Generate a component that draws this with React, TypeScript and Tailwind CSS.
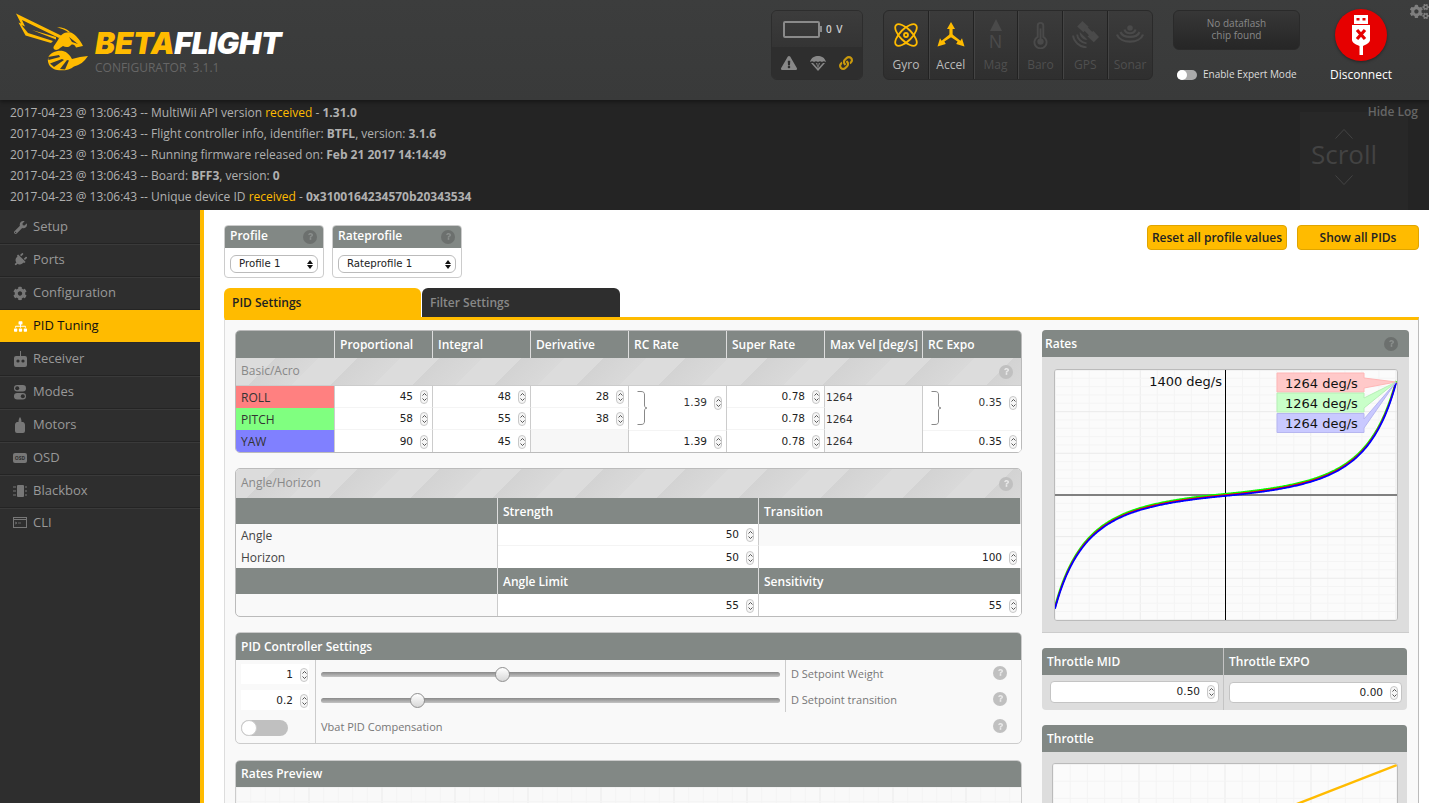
import React from "react";
import { FaWrench, FaPlug, FaCog, FaSitemap, FaCogs, FaExclamationTriangle, FaLink, FaQuestion } from "react-icons/fa";

const Wasp = () => (
  <svg width="90" height="75" viewBox="0 0 90 75" className="shrink-0">
    <g fill="#ffbb00">
      <path d="M16 13.5 L62 36 L59 38 L22 20 L25 26.5 L21.5 25 L28 33 L53 41 L51 43 L25.5 35.5 L18.5 22.5 L21 23.5 Z" />
      <path d="M32 30 L56 37 L56 39.5 Z" />
      <path d="M57 27 C63 27.5 67 29 70 32 L68 32 C65 30 61 28.5 57 27 Z" />
      <path d="M58 40 C60 35 65 31 71 32.5 C76 35 80 40 83 46 L76 47.5 C75 45 73 44 71 45 C70 47 66 48 63 46 L60 48 C56 52 52 49 54 46 Z" />
      <path d="M48 58 C50 52 58 50 63 51 C67 52 70 55 72 59 L80 57 L88 56 C84 62 80 65 74 66.5 C70 70 63 71 57 70 C51 69 47 64 48 58 Z" />
    </g>
    <g fill="#3a3b3b">
      <path d="M69 37 L78 44 L72 42 Z" />
      <path d="M48 57 L59 55 L60 57 L48.5 60 Z" />
      <path d="M50 63.5 L62 59 L64 60 L54 67 Z" />
      <path d="M60 69 L67 60 L69 60.5 L65 69.5 Z" />
    </g>
  </svg>
);

const Gyro = () => (
  <svg width="24" height="24" viewBox="0 0 24 24" fill="none" stroke="#ffbb00" strokeWidth="1.8">
    <ellipse cx="12" cy="12" rx="14" ry="6" transform="rotate(45 12 12)" />
    <ellipse cx="12" cy="12" rx="14" ry="6" transform="rotate(-45 12 12)" />
    <circle cx="12" cy="12" r="2" />
  </svg>
);
const Accel = () => (
  <svg width="28" height="25" viewBox="0 0 28 25" fill="#ffbb00">
    <path d="M14 0 L18 7 L15.6 7 L15.6 13 L12.4 13 L12.4 7 L10 7 Z" />
    <path d="M13.4 11.8 L15.2 14.6 L7.4 19.6 L8.8 22 L0.5 24.5 L3 16.2 L4.6 18.8 Z" />
    <path d="M14.6 11.8 L12.8 14.6 L20.6 19.6 L19.2 22 L27.5 24.5 L25 16.2 L23.4 18.8 Z" />
  </svg>
);
const Mag = () => (
  <div className="flex flex-col items-center">
    <div className="w-0 h-0 border-l-[6px] border-r-[6px] border-b-[12px] border-l-transparent border-r-transparent border-b-[#4a4a4a]" />
    <span className="text-[18px] leading-[18px] mt-[2px] text-[#4a4a4a] font-['Liberation_Sans',sans-serif]">N</span>
  </div>
);
const Baro = () => (
  <svg width="15" height="28" viewBox="0 0 16 28" fill="none" stroke="#4a4a4a" strokeWidth="2">
    <path d="M5 16 V4 a3 3 0 0 1 6 0 V16 a6.5 6.5 0 1 1 -6 0 Z" />
    <circle cx="8" cy="21" r="3.4" fill="#4a4a4a" stroke="none" />
    <path d="M8 20 V7" />
  </svg>
);
const Gps = () => (
  <svg width="27" height="27" viewBox="0 0 26 26" fill="#4a4a4a">
    <path d="M10 0 L16 5.5 L11 10.8 L5 5.3 Z" />
    <path d="M20.5 9.5 L26 15.3 L21 20.5 L15 15 Z" />
    <path d="M12 7.5 L14.5 5.5 L21 12 L18 15.5 L11.5 9 Z" />
    <path d="M1 14 C1.5 19.5 7 25 14 25.5" stroke="#4a4a4a" strokeWidth="1.8" fill="none" />
    <path d="M5 13 C5 17 9 21 14 21.5" stroke="#4a4a4a" strokeWidth="1.8" fill="none" />
    <path d="M7.5 10.5 L15 18 C11 18.5 7 15 7.5 10.5 Z" />
  </svg>
);
const Sonar = () => (
  <svg width="28" height="22" viewBox="0 0 28 22" fill="none" stroke="#4a4a4a" strokeWidth="2.2">
    <circle cx="14" cy="4" r="2.8" fill="#4a4a4a" stroke="none" />
    <path d="M8.5 5.5 C10 10.5 18 10.5 19.5 5.5" />
    <path d="M4.5 8 C7 14.5 21 14.5 23.5 8" />
    <path d="M1 10.5 C4 20 24 20 27 10.5" />
  </svg>
);

const Sensor = ({ label, active, children }: { label: string; active?: boolean; children: React.ReactNode }) => (
  <div className="flex-1 flex flex-col items-center border-r border-[#222] last:border-r-0 shadow-[1px_0_0_#444] last:shadow-none">
    <div className="h-[45px] flex items-center justify-center mt-[1px]">{children}</div>
    <span className={active ? "text-[12px] leading-[16px] text-[#bbb]" : "text-[12px] leading-[16px] text-[#4f4f4f]"}>{label}</span>
  </div>
);

const Usb = () => (
  <svg width="20" height="40" viewBox="0 0 20 40" fill="white">
    <path d="M3 0 H17 V9 H3 Z M5.5 3 V5.5 H8.5 V3 Z M11.5 3 V5.5 H14.5 V3 Z" fillRule="evenodd" />
    <path d="M1 10 H19 V25 C19 28 14 30 12 31 V40 H8.5 V31 C6 30 1 28 1 25 Z" />
    <path d="M6 15 L14 24 M14 15 L6 24" stroke="#e60000" strokeWidth="3.2" />
  </svg>
);

const Nav = ({ label, active, last, icon }: { label: string; active?: boolean; last?: boolean; icon: React.ReactNode }) => (
  <div className={active
    ? "h-[33px] flex items-center bg-[#ffbb00] text-[#111] text-[13px] pl-[13px] border-b border-[#2a2a2a]"
    : last
      ? "h-[31px] flex items-center text-[#999] text-[13px] pl-[13px] pb-[2px]"
      : "h-[33px] flex items-center text-[#999] text-[13px] pl-[13px] border-b border-[#242424] shadow-[0_1px_0_#3a3a3a]"}>
    <span className="w-[14px] flex justify-center items-center">{icon}</span>
    <span className="ml-[6px]">{label}</span>
  </div>
);

const ReceiverIcon = () => (
  <svg width="13" height="16" viewBox="0 0 13 16" fill="#777"><path d="M6 0 H7 V5 H11 a2 2 0 0 1 2 2 V14 a2 2 0 0 1 -2 2 H2 a2 2 0 0 1 -2 -2 V7 a2 2 0 0 1 2 -2 H6 Z" /><circle cx="4" cy="10" r="1.6" fill="#2e2e2e" /><circle cx="9" cy="10" r="1.6" fill="#2e2e2e" /></svg>
);
const ModesIcon = () => (
  <svg width="12" height="15" viewBox="0 0 12 15" fill="#777"><rect y="0" width="12" height="6.5" rx="3.2" /><rect y="8" width="12" height="6.5" rx="3.2" /><circle cx="3.2" cy="3.2" r="2" fill="#2e2e2e" /><circle cx="8.8" cy="11.2" r="2" fill="#2e2e2e" /></svg>
);
const MotorsIcon = () => (
  <svg width="10" height="16" viewBox="0 0 10 16" fill="#777"><path d="M5 0 C6 1 6.5 3 6.5 5 H8 C9.5 5.5 10 7 10 8 V14 a2 2 0 0 1 -2 2 H2 a2 2 0 0 1 -2 -2 V8 C0 7 .5 5.5 2 5 H3.5 C3.5 3 4 1 5 0 Z" /></svg>
);
const OsdIcon = () => (
  <div className="w-[14px] h-[10px] rounded-[2px] bg-[#777] flex items-center justify-center"><span className="text-[5px] leading-none font-bold text-[#2e2e2e]">OSD</span></div>
);
const BlackboxIcon = () => (
  <svg width="14" height="12" viewBox="0 0 14 12" fill="#777"><rect x="4" width="7" height="12" rx="1" /><path d="M0 1.5 H3 V2.5 H0 Z M0 5.5 H3 V6.5 H0 Z M0 9.5 H3 V10.5 H0 Z M12 1.5 H14 V2.5 H12 Z M12 5.5 H14 V6.5 H12 Z M12 9.5 H14 V10.5 H12 Z" /></svg>
);
const CliIcon = () => (
  <svg width="14" height="11" viewBox="0 0 14 11" fill="none" stroke="#777"><rect x=".5" y=".5" width="13" height="10" /><path d="M.5 2.5 H13.5" /><path d="M2 5 L4 6 L2 7 M5 6 H8" strokeWidth=".8" /></svg>
);

const Help = ({ light, className }: { light?: boolean; className?: string }) => (
  <span className={(light
    ? "w-[14px] h-[14px] rounded-full bg-[#c0c0c0] flex items-center justify-center shrink-0 "
    : "w-[14px] h-[14px] rounded-full bg-[#6c706e] flex items-center justify-center shrink-0 ") + (className ?? "")}>
    <FaQuestion size={7} color={light ? "#e8e8e8" : "#8a8e8c"} />
  </span>
);

const Spin = () => (
  <span className="w-[8px] h-[14px] rounded-[4px] border border-[#c8c8c8] bg-[#f6f6f6] flex flex-col items-center justify-center gap-[2px] shrink-0">
    <svg width="5" height="3" viewBox="0 0 5 3"><path d="M.5 2.5 L2.5 .5 L4.5 2.5" fill="none" stroke="#444" strokeWidth=".9" /></svg>
    <svg width="5" height="3" viewBox="0 0 5 3"><path d="M.5 .5 L2.5 2.5 L4.5 .5" fill="none" stroke="#444" strokeWidth=".9" /></svg>
  </span>
);

const Num = ({ v, className }: { v?: string; className?: string }) => (
  <div className={"flex items-center justify-end gap-[7px] pt-[1px] pr-[4px] bg-white font-['DejaVu_Sans',sans-serif] text-[10.5px] text-[#222] " + (className ?? "")}>
    {v !== undefined && <><span>{v}</span><Spin /></>}
  </div>
);

const Bracket = () => (
  <svg width="11" height="34" viewBox="0 0 11 34" fill="none" stroke="#888" className="shrink-0"><path d="M.5 .5 H4 C7 .5 7.5 2 7.5 4 V14 C7.5 16 8.5 17 10 17 C8.5 17 7.5 18 7.5 20 V30 C7.5 32 7 33.5 4 33.5 H.5" /></svg>
);

const Select = ({ label, w }: { label: string; w: string }) => (
  <div className={"h-[18px] rounded-[6px] border border-[#bbb] bg-white flex items-center justify-between pl-[8px] pr-[4px] font-['DejaVu_Sans',sans-serif] text-[10.2px] text-[#222] " + w}>
    <span>{label}</span>
    <span className="flex flex-col gap-[1px]">
      <span className="w-0 h-0 border-l-[3px] border-r-[3px] border-b-[4px] border-l-transparent border-r-transparent border-b-[#111]" />
      <span className="w-0 h-0 border-l-[3px] border-r-[3px] border-t-[4px] border-l-transparent border-r-transparent border-t-[#111]" />
    </span>
  </div>
);

const Th = ({ children, className }: { children?: React.ReactNode; className?: string }) => (
  <div className={"bg-[#828885] text-white text-[12px] font-semibold flex items-center pl-[5px] border-r border-[#ddd] last:border-r-0 " + (className ?? "")}>{children}</div>
);

const stripes = "bg-[repeating-linear-gradient(135deg,#dcdcdc_0,#dcdcdc_28px,#d3d3d3_28px,#d9d9d9_58px)]";

const rateCurve = (t: number) => {
  const a = Math.abs(t);
  const x = t * a * a * a * 0.35 + t * 0.65;
  return (200 * 1.39 * x) / (1 - a * 0.78);
};
const curvePath = (dy: number) => {
  let d = "";
  for (let i = 0; i <= 340; i++) {
    const t = (i - 170) / 170;
    const x = 170.5 + 170.5 * t;
    const y = 125 - (125 * rateCurve(t)) / 1400 + dy;
    d += (i === 0 ? "M" : "L") + x.toFixed(2) + " " + y.toFixed(2) + " ";
  }
  return d;
};

const Grid = ({ w, h, sx, sy, mx, my }: { w: number; h: number; sx: number; sy: number; mx: number; my: number }) => {
  const v: React.ReactNode[] = [];
  for (let i = 0; i * sx <= w; i++) {
    v.push(<line key={"v" + i} x1={i * sx} x2={i * sx} y1={0} y2={h} stroke={i % mx === 0 ? "#ebebeb" : "#f4f4f4"} />);
  }
  for (let i = 0; i * sy <= h; i++) {
    v.push(<line key={"h" + i} y1={i * sy} y2={i * sy} x1={0} x2={w} stroke={i % my === 0 ? "#ebebeb" : "#f4f4f4"} />);
  }
  return <>{v}</>;
};

const RatesChart = () => (
  <svg width="342" height="250" viewBox="0 0 342 250" className="block rounded-[3px] border border-[#bbb] bg-[#fbfbfb] box-content -m-px">
    <Grid w={342} h={250} sx={17.05} sy={8.33} mx={5} my={5} />
    <line x1="0" x2="342" y1="125" y2="125" stroke="#808080" strokeWidth="2" />
    <line x1="170.5" x2="170.5" y1="0" y2="250" stroke="#000" strokeWidth="1" />
    <path d={curvePath(-1.1)} fill="none" stroke="#00ff00" strokeWidth="2" />
    <path d={curvePath(0)} fill="none" stroke="#ff0000" strokeWidth="1.6" />
    <path d={curvePath(0.9)} fill="none" stroke="#0000ff" strokeWidth="1.8" />
    <g fontFamily="'DejaVu Sans',sans-serif" fontSize="13" fill="#111">
      <text x="167" y="16" textAnchor="end">1400 deg/s</text>
      <path d="M222 3 H309 V8 L341 12 L309 18 V22 H222 Z" fill="#ffc9c9" stroke="#ffb6b6" />
      <path d="M222 23 H309 V28 L341 12 L309 38 V42 H222 Z" fill="#c9ffc9" stroke="#b6f0b6" />
      <path d="M222 43.5 H309 V49 L341 12 L309 58 V62.5 H222 Z" fill="#c9c9ff" stroke="#b6b6f0" />
      <text x="230" y="18">1264 deg/s</text>
      <text x="230" y="38">1264 deg/s</text>
      <text x="230" y="58">1264 deg/s</text>
    </g>
  </svg>
);

const Slider = ({ pos }: { pos: string }) => (
  <div className="relative h-[5px] rounded-full bg-gradient-to-b from-[#8a8a8a] to-[#c4c4c4]">
    <span className={"absolute -top-[5px] w-[15px] h-[15px] rounded-full border border-[#8f8f8f] bg-gradient-to-b from-white to-[#d8d8d8] " + pos} />
  </div>
);

export default function App() {
  const pidCols = "grid grid-cols-[99px_98px_98px_98px_98px_98px_98px_1fr]";
  const maxVel = "bg-[#f9f9f9] border-r border-[#ccc] flex items-center pt-[1px] pl-[1px] font-['DejaVu_Sans',sans-serif] text-[10.5px]";
  return (
    <div className="h-[803px] w-[1429px] overflow-hidden flex flex-col bg-white font-['Open_Sans',sans-serif]">
      {/* Header */}
      <header className="h-[100px] shrink-0 bg-gradient-to-b from-[#3c3d3d] to-[#393a3a] flex relative z-10 shadow-[0_2px_4px_rgba(0,0,0,.4)]">
        <div className="w-[771px] flex items-start">
          <Wasp />
          <div className="ml-[5px] mt-[27px] flex flex-col">
            <div className="font-['Inter',sans-serif] font-black italic text-[30px] leading-[32px] tracking-[-0.3px] whitespace-nowrap">
              <span className="text-[#ffbb00]">BETA</span><span className="text-white">FLIGHT</span>
            </div>
            <div className="text-[12px] leading-[14px] text-[#666] mt-[2px] whitespace-pre">CONFIGURATOR  3.1.1</div>
          </div>
        </div>
        <div className="mt-[10px] w-[92px] h-[70px] rounded-[6px] border border-[#2d2d2d] overflow-hidden flex flex-col bg-[#393939]">
          <div className="h-[36px] flex items-center pl-[11px] bg-gradient-to-b from-[#3c3c3c] to-[#343434]">
            <div className="w-[37px] h-[17px] rounded-[2px] border-2 border-[#8a8a8a]" />
            <div className="w-[2px] h-[6px] bg-[#8a8a8a]" />
            <span className="ml-[4px] text-[10px] font-semibold text-[#ccc] tracking-[1px]">0 V</span>
          </div>
          <div className="flex-1 bg-[#2e2e2e] flex items-center justify-between px-[9px]">
            <FaExclamationTriangle size={16} color="#888" />
            <svg width="16" height="15" viewBox="0 0 16 15" fill="#888">
              <path d="M0 6 C1 1.5 5 0 8 0 C11 0 15 1.5 16 6 C14.5 5 13 5 12 6 C10.5 5 9.5 5 8 6 C6.5 5 5.5 5 4 6 C3 5 1.5 5 0 6 Z" />
              <path d="M1 7 L8 15 L15 7 L13 7 L8 12.5 L10 7 L8.8 7 L8 11 L7.2 7 L6 7 L8 12.5 L3 7 Z" />
            </svg>
            <FaLink size={14} color="#c9990d" />
          </div>
        </div>
        <div className="ml-[20px] mt-[10px] w-[270px] h-[70px] rounded-[6px] border border-[#2a2a2a] bg-gradient-to-b from-[#3b3b3b] to-[#2f2f2f] flex text-center">
          <Sensor label="Gyro" active><Gyro /></Sensor>
          <Sensor label="Accel" active><Accel /></Sensor>
          <Sensor label="Mag"><Mag /></Sensor>
          <Sensor label="Baro"><Baro /></Sensor>
          <Sensor label="GPS"><Gps /></Sensor>
          <Sensor label="Sonar"><Sonar /></Sensor>
        </div>
        <div className="ml-[20px] w-[127px] flex flex-col">
          <div className="mt-[10px] h-[40px] pb-[2px] rounded-[6px] border border-[#2a2a2a] bg-gradient-to-b from-[#373737] to-[#262626] text-[10px] leading-[12px] text-[#888] text-center flex items-center justify-center">
            <span>No dataflash<br />chip found</span>
          </div>
          <div className="mt-[17px] ml-[4px] flex items-center whitespace-nowrap">
            <span className="w-[20px] h-[10px] rounded-full bg-[#aaa] flex items-center">
              <span className="w-[10px] h-[10px] rounded-full bg-white" />
            </span>
            <span className="ml-[6px] text-[10px] text-[#ddd]">Enable Expert Mode</span>
          </div>
        </div>
        <div className="ml-[29px] w-[64px] flex flex-col items-center">
          <div className="mt-[9px] w-[52px] h-[52px] rounded-full bg-[#e60000] flex items-center justify-center shadow-[0_1px_3px_rgba(0,0,0,.4)]">
            <Usb />
          </div>
          <span className="mt-[6px] text-[12px] leading-[16px] font-medium text-white whitespace-nowrap">Disconnect</span>
        </div>
        <span className="absolute right-0 top-[2px]"><FaCogs size={19} color="#7f7f7f" /></span>
      </header>

      {/* Log */}
      <section className="h-[110px] shrink-0 bg-[#242424] relative pl-[10px] pt-[2px] text-[12px] leading-[21px] text-[#b0b0b0] font-medium">
        <div>2017-04-23 @ 13:06:43 -- MultiWii API version <span className="text-[#ffbb00]">received</span> - <b>1.31.0</b></div>
        <div>2017-04-23 @ 13:06:43 -- Flight controller info, identifier: <b>BTFL</b>, version: <b>3.1.6</b></div>
        <div>2017-04-23 @ 13:06:43 -- Running firmware released on: <b>Feb 21 2017 14:14:49</b></div>
        <div>2017-04-23 @ 13:06:43 -- Board: <b>BFF3</b>, version: <b>0</b></div>
        <div>2017-04-23 @ 13:06:43 -- Unique device ID <span className="text-[#ffbb00]">received</span> - <b>0x3100164234570b20343534</b></div>
        <div className="absolute right-[21px] top-[12px] w-[108px] h-[98px] bg-[#282828] flex flex-col items-center pt-[17px] pr-[20px]">
          <svg width="18" height="10" viewBox="0 0 18 10" fill="none" stroke="#444"><path d="M.5 9.5 L9 .5 L17.5 9.5" /></svg>
          <span className="text-[26px] leading-[32px] -mt-[1px] text-[#434343]">Scroll</span>
          <svg width="18" height="10" viewBox="0 0 18 10" fill="none" stroke="#444" className="mt-[5px]"><path d="M.5 .5 L9 9.5 L17.5 .5" /></svg>
        </div>
        <span className="absolute right-[11px] top-[1px] text-[12px] font-semibold text-[#666]">Hide Log</span>
      </section>

      {/* Main */}
      <div className="flex-1 min-h-0 flex">
        <aside className="w-[204px] shrink-0 bg-[#2e2e2e] border-r-4 border-[#ffbb00] pt-[1px]">
          <Nav label="Setup" icon={<FaWrench size={13} color="#777" />} />
          <Nav label="Ports" icon={<FaPlug size={14} color="#777" className="rotate-45" />} />
          <Nav label="Configuration" icon={<FaCog size={15} color="#777" />} />
          <Nav label="PID Tuning" active icon={<FaSitemap size={13} color="#fff" />} />
          <Nav label="Receiver" icon={<ReceiverIcon />} />
          <Nav label="Modes" icon={<ModesIcon />} />
          <Nav label="Motors" icon={<MotorsIcon />} />
          <Nav label="OSD" icon={<OsdIcon />} />
          <Nav label="Blackbox" icon={<BlackboxIcon />} />
          <Nav label="CLI" last icon={<CliIcon />} />
        </aside>

        <main className="flex-1 min-w-0 pl-[20px] pr-[10px] pt-[15px] overflow-hidden">
          {/* Top bar */}
          <div className="flex items-start h-[63px]">
            <div className="w-[100px] h-[53px] rounded-[4px] border border-[#ccc] overflow-hidden mr-[8px]">
              <div className="h-[23px] -mx-px -mt-px bg-[#828885] flex items-center justify-between pl-[6px] pr-[7px] text-white text-[12px] font-semibold"><span className="mb-[2px]">Profile</span><Help /></div>
              <div className="pl-[5px] pt-[7px]"><Select label="Profile 1" w="w-[88px]" /></div>
            </div>
            <div className="w-[130px] h-[53px] rounded-[4px] border border-[#ccc] overflow-hidden">
              <div className="h-[23px] -mx-px -mt-px bg-[#828885] flex items-center justify-between pl-[6px] pr-[7px] text-white text-[12px] font-semibold"><span className="mb-[2px]">Rateprofile</span><Help /></div>
              <div className="pl-[5px] pt-[7px]"><Select label="Rateprofile 1" w="w-[118px]" /></div>
            </div>
            <div className="ml-auto w-[140px] h-[25px] rounded-[4px] bg-[#ffbb00] border border-[#e0a500] flex items-center justify-center text-[12px] font-semibold text-[#222]">Reset all profile values</div>
            <div className="ml-[10px] w-[122px] h-[25px] rounded-[4px] bg-[#ffbb00] border border-[#e0a500] flex items-center justify-center text-[12px] font-semibold text-[#222]">Show all PIDs</div>
          </div>
          {/* Tabs */}
          <div className="flex h-[29px] gap-[1px]">
            <div className="w-[197px] bg-[#ffbb00] rounded-t-[6px] flex items-center pl-[8px] text-[12px] font-semibold text-[#222]">PID Settings</div>
            <div className="w-[198px] bg-[#2e2e2e] rounded-t-[6px] flex items-center pl-[8px] text-[12px] font-semibold text-[#888]">Filter Settings</div>
          </div>
          <div className="h-[600px] border-t-[3px] border-t-[#ffbb00] border-l border-l-[#ddd] border-r border-r-[#bbb] bg-[#f9f9f9] flex pl-[10px] pt-[10px]">
            {/* Left column */}
            <div className="w-[787px] shrink-0 flex flex-col">
              {/* PID table */}
              <div className="h-[123px] shrink-0 rounded-[5px] border border-[#bbb] overflow-hidden">
                <div className={pidCols + " h-[27px]"}>
                  <Th />
                  <Th>Proportional</Th>
                  <Th>Integral</Th>
                  <Th>Derivative</Th>
                  <Th>RC Rate</Th>
                  <Th>Super Rate</Th>
                  <Th>Max Vel [deg/s]</Th>
                  <Th>RC Expo</Th>
                </div>
                <div className={"h-[28px] flex items-center justify-between pl-[5px] pr-[8px] text-[12px] text-[#888] border-b border-[#ccc] " + stripes}>
                  <span className="mb-[2px]">Basic/Acro</span><Help light />
                </div>
                <div className={pidCols + " grid-rows-[22px_22px_22px] bg-white text-[12px] text-[#333]"}>
                  <div className="bg-[#ff8080] pl-[5px] pt-[1px] flex items-center border-r border-[#ccc]">ROLL</div>
                  <Num v="45" className="border-r border-[#ccc] border-b border-b-[#f4f4f4]" />
                  <Num v="48" className="border-r border-[#ccc] border-b border-b-[#f4f4f4]" />
                  <Num v="28" className="border-r border-[#ccc] border-b border-b-[#f4f4f4]" />
                  <div className="row-span-2 bg-white border-r border-[#ccc] flex items-center justify-between pl-[8px] pr-[4px] font-['DejaVu_Sans',sans-serif] text-[10.5px]">
                    <Bracket />
                    <div className="flex items-center gap-[7px] mb-[11px]"><span>1.39</span><Spin /></div>
                  </div>
                  <Num v="0.78" className="border-r border-[#ccc] border-b border-b-[#f4f4f4]" />
                  <div className={maxVel}>1264</div>
                  <div className="row-span-2 bg-white flex items-center justify-between pl-[8px] pr-[4px] font-['DejaVu_Sans',sans-serif] text-[10.5px]">
                    <Bracket />
                    <div className="flex items-center gap-[7px] mb-[11px]"><span>0.35</span><Spin /></div>
                  </div>
                  <div className="bg-[#80ff80] pl-[5px] pt-[1px] flex items-center border-r border-[#ccc]">PITCH</div>
                  <Num v="58" className="border-r border-[#ccc] border-b border-b-[#f4f4f4]" />
                  <Num v="55" className="border-r border-[#ccc] border-b border-b-[#f4f4f4]" />
                  <Num v="38" className="border-r border-[#ccc] border-b border-b-[#f4f4f4]" />
                  <Num v="0.78" className="border-r border-[#ccc] border-b border-b-[#f4f4f4]" />
                  <div className={maxVel}>1264</div>
                  <div className="bg-[#8080ff] pl-[5px] pt-[1px] flex items-center border-r border-[#ccc]">YAW</div>
                  <Num v="90" className="border-r border-[#ccc]" />
                  <Num v="45" className="border-r border-[#ccc]" />
                  <div className="bg-[#f7f7f7] border-r border-[#ccc]" />
                  <Num v="1.39" className="border-r border-[#ccc] border-t border-t-[#f4f4f4]" />
                  <Num v="0.78" className="border-r border-[#ccc]" />
                  <div className={maxVel}>1264</div>
                  <Num v="0.35" className="border-t border-t-[#f4f4f4]" />
                </div>
              </div>

              {/* Angle/Horizon */}
              <div className="mt-[15px] h-[149px] shrink-0 rounded-[5px] border border-[#bbb] overflow-hidden">
                <div className={"h-[29px] flex items-center justify-between pl-[5px] pr-[8px] text-[12px] text-[#888] " + stripes}>
                  <span className="mb-[2px]">Angle/Horizon</span><Help light />
                </div>
                <div className="grid grid-cols-[262px_261px_1fr] grid-rows-[26px_22px_22px_26px_22px] text-[12px] text-[#444]">
                  <Th /><Th className="pt-[1px]">Strength</Th><Th className="pt-[1px]">Transition</Th>
                  <div className="pl-[5px] pt-[1px] flex items-center border-r border-[#ccc]">Angle</div>
                  <Num v="50" className="border-r border-[#ccc] border-b border-b-[#f4f4f4]" />
                  <div />
                  <div className="pl-[5px] pt-[1px] flex items-center border-r border-[#ccc]">Horizon</div>
                  <Num v="50" className="border-r border-[#ccc]" />
                  <Num v="100" />
                  <Th /><Th className="pt-[1px]">Angle Limit</Th><Th className="pt-[1px]">Sensitivity</Th>
                  <div className="border-r border-[#ccc]" />
                  <Num v="55" className="border-r border-[#ccc]" />
                  <Num v="55" />
                </div>
              </div>

              {/* PID Controller Settings */}
              <div className="mt-[15px] h-[112px] shrink-0 rounded-[5px] border border-[#ccc] overflow-hidden">
                <div className="h-[27px] bg-[#828885] flex items-center pl-[5px] text-white text-[12px] font-semibold">PID Controller Settings</div>
                <div className="grid grid-cols-[80px_469px_1fr] grid-rows-[28px_24px_31px]">
                  <div className="border-r border-[#ccc] flex items-center pl-[5px] pr-[6px]">
                    <Num v="1" className="w-full h-[20px] pr-[1px]!" />
                  </div>
                  <div className="pl-[5px] pr-[5px] flex items-center"><div className="w-full"><Slider pos="left-[174px]" /></div></div>
                  <div className="border-l border-[#ccc] flex items-center justify-between pl-[5px] pr-[14px] text-[11px] text-[#777]"><span>D Setpoint Weight</span><Help light className="mb-[3px]" /></div>
                  <div className="border-r border-[#ccc] flex items-center pl-[5px] pr-[6px]">
                    <Num v="0.2" className="w-full h-[20px] pr-[1px]!" />
                  </div>
                  <div className="pl-[5px] pr-[5px] flex items-center"><div className="w-full"><Slider pos="left-[89px]" /></div></div>
                  <div className="border-l border-[#ccc] flex items-center justify-between pl-[5px] pr-[14px] text-[11px] text-[#777]"><span>D Setpoint transition</span><Help light className="mb-[3px]" /></div>
                  <div className="border-r border-[#ccc] flex items-center pl-[5px]">
                    <span className="w-[47px] h-[16px] rounded-full bg-[#c0c0c0] flex items-center">
                      <span className="w-[16px] h-[16px] rounded-full bg-white border border-[#ccc]" />
                    </span>
                  </div>
                  <div className="col-span-2 flex items-center justify-between pl-[5px] pr-[14px] text-[11px] text-[#777]"><span>Vbat PID Compensation</span><Help light className="mb-[3px]" /></div>
                </div>
              </div>

              {/* Rates Preview */}
              <div className="mt-[16px] h-[160px] shrink-0 rounded-t-[5px] border border-[#ccc] overflow-hidden">
                <div className="h-[26px] bg-[#828885] flex items-center pl-[5px] text-white text-[12px] font-semibold">Rates Preview</div>
                <svg width="785" height="130" className="block">
                  <Grid w={785} h={130} sx={14.6} sy={14.6} mx={5} my={5} />
                </svg>
              </div>
            </div>

            {/* Right column */}
            <div className="ml-[20px] w-[367px] shrink-0 flex flex-col">
              <div className="h-[303px] shrink-0 rounded-t-[4px] border-b border-[#ccc] bg-[#ddd] overflow-hidden">
                <div className="h-[27px] bg-[#828885] flex items-center justify-between pl-[3px] pr-[11px] text-white text-[12px] font-semibold"><span>Rates</span><Help /></div>
                <div className="pl-[13px] pt-[13px]"><RatesChart /></div>
              </div>
              <div className="mt-[15px] w-[365px] h-[62px] shrink-0 rounded-[4px] bg-[#ddd] overflow-hidden">
                <div className="grid grid-cols-[182px_1fr] h-full">
                  <div className="border-r border-[#c4c4c4] flex flex-col">
                    <div className="h-[27px] bg-[#828885] flex items-center pl-[5px] text-white text-[12px] font-semibold">Throttle MID</div>
                    <div className="pl-[8px] pt-[6px]">
                      <div className="w-[169px] h-[22px] rounded-[4px] border border-[#c4c4c4] bg-white flex items-center justify-end gap-[7px] pr-[3px] font-['DejaVu_Sans',sans-serif] text-[10.5px] text-[#222]"><span>0.50</span><Spin /></div>
                    </div>
                  </div>
                  <div className="flex flex-col">
                    <div className="h-[27px] bg-[#828885] flex items-center pl-[5px] text-white text-[12px] font-semibold">Throttle EXPO</div>
                    <div className="pl-[5px] pt-[7px]">
                      <div className="w-[173px] h-[21px] rounded-[4px] border border-[#c4c4c4] bg-white flex items-center justify-end gap-[7px] pr-[3px] font-['DejaVu_Sans',sans-serif] text-[10.5px] text-[#222]"><span>0.00</span><Spin /></div>
                    </div>
                  </div>
                </div>
              </div>
              <div className="mt-[15px] w-[365px] h-[200px] shrink-0 rounded-t-[4px] bg-[#ddd] overflow-hidden">
                <div className="h-[27px] bg-[#828885] flex items-center pl-[5px] text-white text-[12px] font-semibold">Throttle</div>
                <div className="pl-[10px] pt-[11px]">
                  <svg width="344" height="150" viewBox="0 0 344 150" className="block rounded-[3px] border border-[#bbb] bg-[#fbfbfb] box-content">
                    <Grid w={344} h={150} sx={17.2} sy={17.2} mx={5} my={5} />
                    <line x1="0" x2="344" y1="135" y2="1" stroke="#ffbb00" strokeWidth="2.4" />
                  </svg>
                </div>
              </div>
            </div>
          </div>
        </main>
      </div>
    </div>
  );
}
